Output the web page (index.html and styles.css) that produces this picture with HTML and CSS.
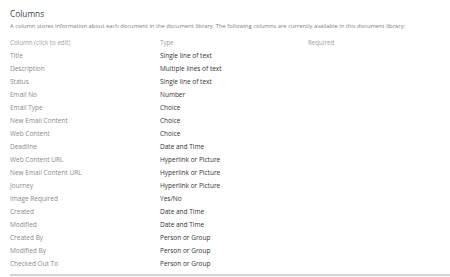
FILE: index.html
```html
<!DOCTYPE html>
<html>
<head>
<meta charset="utf-8">
<link rel="stylesheet" href="styles.css">
</head>
<body>
<div class="page">
  <h2 class="title">Columns</h2>
  <p class="desc">A column stores information about each document in the document library. The following columns are currently available in this document library:</p>
  <div class="grid">
    <div class="row head"><span>Column (click to edit)</span><span>Type</span><span>Required</span></div>
    <div class="row"><span class="name">Title</span><span class="type">Single line of text</span><span></span></div>
    <div class="row"><span class="name">Description</span><span class="type">Multiple lines of text</span><span></span></div>
    <div class="row"><span class="name">Status</span><span class="type">Single line of text</span><span></span></div>
    <div class="row"><span class="name">Email No</span><span class="type">Number</span><span></span></div>
    <div class="row"><span class="name">Email Type</span><span class="type">Choice</span><span></span></div>
    <div class="row"><span class="name">New Email Content</span><span class="type">Choice</span><span></span></div>
    <div class="row"><span class="name">Web Content</span><span class="type">Choice</span><span></span></div>
    <div class="row"><span class="name">Deadline</span><span class="type">Date and Time</span><span></span></div>
    <div class="row"><span class="name">Web Content URL</span><span class="type">Hyperlink or Picture</span><span></span></div>
    <div class="row"><span class="name">New Email Content URL</span><span class="type">Hyperlink or Picture</span><span></span></div>
    <div class="row"><span class="name">Journey</span><span class="type">Hyperlink or Picture</span><span></span></div>
    <div class="row"><span class="name">Image Required</span><span class="type">Yes/No</span><span></span></div>
    <div class="row"><span class="name">Created</span><span class="type">Date and Time</span><span></span></div>
    <div class="row"><span class="name">Modified</span><span class="type">Date and Time</span><span></span></div>
    <div class="row"><span class="name">Created By</span><span class="type">Person or Group</span><span></span></div>
    <div class="row"><span class="name">Modified By</span><span class="type">Person or Group</span><span></span></div>
    <div class="row"><span class="name">Checked Out To</span><span class="type">Person or Group</span><span></span></div>
  </div>
  <div class="rule"></div>
</div>
</body>
</html>
```

FILE: styles.css
```css
html, body {
  margin: 0;
  padding: 0;
  background: #fff;
}
.page {
  font-family: "Open Sans", "Noto Sans", sans-serif;
  padding-top: 8px;
}
.title {
  margin: 0 0 0 10px;
  font-size: 8.3px;
  font-weight: normal;
  color: #444;
  line-height: 12px;
}
.desc {
  margin: 1px 0 0 10px;
  font-size: 5.8px;
  color: #808080;
  line-height: 10px;
  white-space: nowrap;
}
.grid {
  margin: 5px 0 0 10px;
}
.row {
  display: grid;
  grid-template-columns: 150px 148px 1fr;
  height: 13px;
  align-items: center;
  font-size: 6.5px;
}
.row.head {
  font-size: 6.2px;
  color: #a0a0a0;
}
.name {
  color: #8a8a8a;
}
.type {
  color: #333;
}
.rule {
  margin: 4px 0 0 10px;
  border-top: 2px solid #d4d4d4;
}
```
